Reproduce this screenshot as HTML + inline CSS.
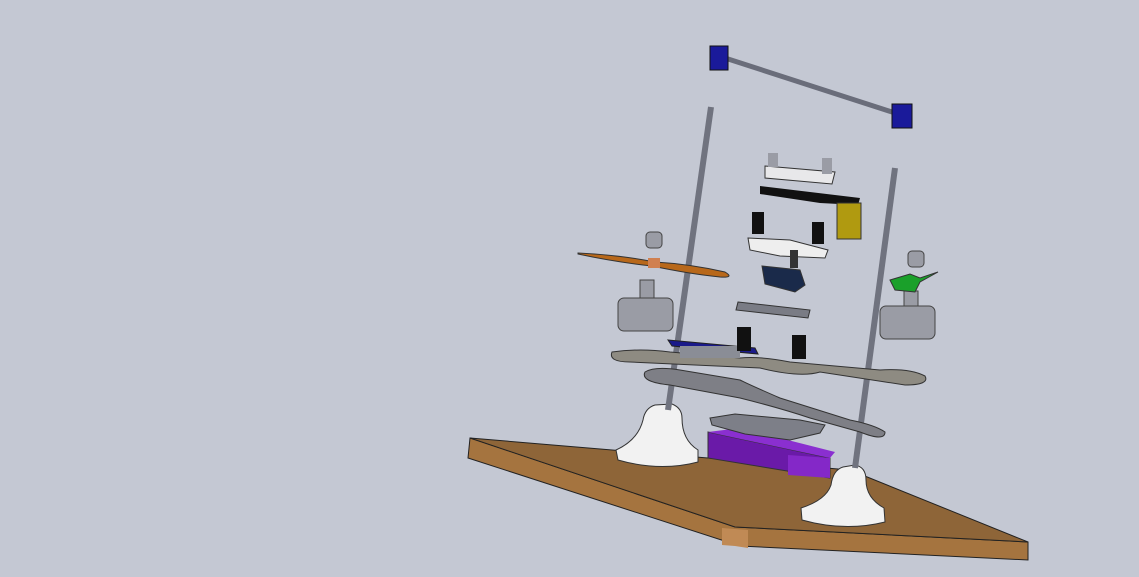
<!DOCTYPE html>
<html><head><meta charset="utf-8"><style>
html,body{margin:0;padding:0;background:#c4c8d3;}
svg{display:block}
</style></head><body>
<svg width="1139" height="577" viewBox="0 0 1139 577" xmlns="http://www.w3.org/2000/svg">
<rect width="1139" height="577" fill="#c4c8d3"/>
<!-- board -->
<polygon points="470,438 468,458 740,546 1028,560 1028,542 735,527" fill="#a5743f" stroke="#222" stroke-width="1"/>
<polygon points="470,438 850,470 1028,542 735,527" fill="#8e6538" stroke="#222" stroke-width="1"/>
<polygon points="722,528 748,530 748,548 735,546 722,545" fill="#c08a55"/>
<!-- purple box -->
<polygon points="708,432 830,458 830,478 708,458" fill="#6a1aa8" stroke="#333"/>
<polygon points="708,432 740,428 835,452 830,458" fill="#8a2fd0"/>
<polygon points="788,455 830,458 830,478 788,475" fill="#8428c8"/>
<!-- lower plate -->
<polygon points="710,418 735,414 800,420 825,425 820,433 790,440 745,434 712,425" fill="#7d7f88" stroke="#333"/>
<!-- left foot -->
<path d="M655,405 Q645,408 643,420 Q638,440 616,450 L618,460 Q660,472 698,462 L698,450 Q682,440 682,418 Q682,408 672,404 Z" fill="#f2f2f2" stroke="#333"/>
<!-- right foot -->
<path d="M843,467 Q833,470 831,485 Q826,500 801,508 L802,520 Q845,532 885,522 L884,508 Q866,498 866,480 Q866,467 855,465 Z" fill="#f2f2f2" stroke="#333"/>
<!-- rods -->
<line x1="711" y1="107" x2="668" y2="410" stroke="#70737f" stroke-width="6"/>
<line x1="895" y1="168" x2="855" y2="468" stroke="#70737f" stroke-width="6"/>
<!-- frame arms -->
<path d="M612,352 Q608,362 630,362 L760,368 Q800,378 820,372 L905,385 Q930,385 925,376 Q910,368 880,370 L790,362 Q760,356 740,358 L670,352 Q640,348 612,352 Z" fill="#8e8b82" stroke="#333"/>
<path d="M645,372 Q640,382 670,385 L740,398 Q780,408 810,418 L860,432 Q885,442 885,432 Q875,425 850,420 L780,398 Q750,385 740,380 L680,370 Q655,366 645,372 Z" fill="#7e7f86" stroke="#333"/>
<!-- blue board -->
<polygon points="668,340 755,348 758,354 672,346" fill="#1a1a8a" stroke="#222"/>
<rect x="680" y="346" width="60" height="12" fill="#8a8d96"/>
<!-- motors -->
<rect x="640" y="280" width="14" height="20" fill="#9a9ca5" stroke="#444"/>
<rect x="618" y="298" width="55" height="33" rx="6" fill="#9a9ca5" stroke="#444"/>
<rect x="646" y="232" width="16" height="16" rx="4" fill="#9a9ca5" stroke="#444"/>
<rect x="904" y="291" width="14" height="20" fill="#9a9ca5" stroke="#444"/>
<rect x="880" y="306" width="55" height="33" rx="6" fill="#9a9ca5" stroke="#444"/>
<rect x="908" y="251" width="16" height="16" rx="4" fill="#9a9ca5" stroke="#444"/>
<!-- propellers -->
<path d="M578,253 Q620,255 655,262 Q690,264 725,272 Q735,278 720,277 Q690,274 652,266 Q615,262 578,254 Z" fill="#b8681a" stroke="#333"/>
<rect x="648" y="258" width="12" height="10" fill="#d08050"/>
<path d="M890,280 L910,274 L920,278 L938,272 L920,282 L915,292 L895,290 Z" fill="#1aa02a" stroke="#333"/>
<!-- center stack -->
<polygon points="765,166 835,172 832,184 765,178" fill="#e8e8ea" stroke="#333"/>
<rect x="768" y="153" width="10" height="14" fill="#9a9ca5"/><rect x="822" y="158" width="10" height="16" fill="#9a9ca5"/>
<polygon points="760,186 860,198 858,205 820,203 760,194" fill="#111"/>
<rect x="837" y="203" width="24" height="36" fill="#b09a10" stroke="#333"/>
<rect x="752" y="212" width="12" height="22" fill="#111"/><rect x="812" y="222" width="12" height="22" fill="#111"/>
<polygon points="748,238 790,240 828,250 825,258 780,256 750,250" fill="#eee" stroke="#333"/>
<polygon points="762,266 800,270 805,285 795,292 765,284" fill="#1a2a4a" stroke="#333"/>
<rect x="790" y="250" width="8" height="18" fill="#333"/>
<polygon points="738,302 810,310 808,318 736,310" fill="#7a7c85" stroke="#333"/>
<rect x="737" y="327" width="14" height="24" fill="#111"/><rect x="792" y="335" width="14" height="24" fill="#111"/>
<!-- top bar -->
<line x1="725" y1="58" x2="895" y2="113" stroke="#6a6d7a" stroke-width="5"/>
<rect x="710" y="46" width="18" height="24" fill="#1a1a9a" stroke="#111"/>
<rect x="892" y="104" width="20" height="24" fill="#1a1a9a" stroke="#111"/>
</svg>
</body></html>
